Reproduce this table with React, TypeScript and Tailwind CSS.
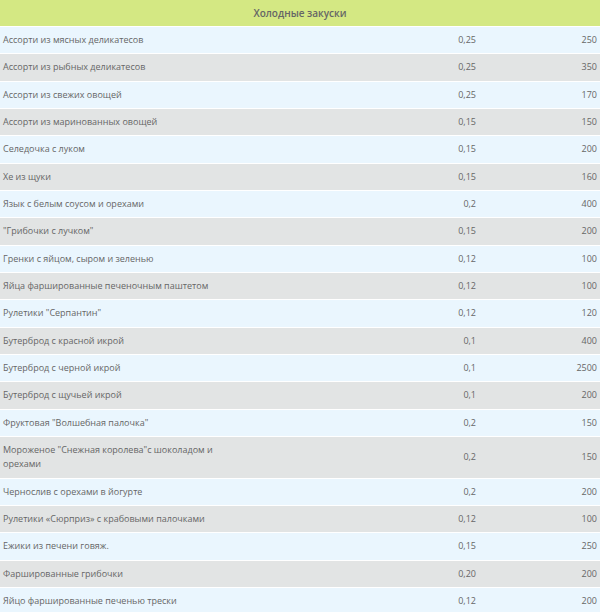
const ITEMS: [string, string, string][] = [
  ['Ассорти из мясных деликатесов', '0,25', '250'],
  ['Ассорти из рыбных деликатесов', '0,25', '350'],
  ['Ассорти из свежих овощей', '0,25', '170'],
  ['Ассорти из маринованных овощей', '0,15', '150'],
  ['Селедочка с луком', '0,15', '200'],
  ['Хе из щуки', '0,15', '160'],
  ['Язык с белым соусом и орехами', '0,2', '400'],
  ['"Грибочки с лучком"', '0,15', '200'],
  ['Гренки с яйцом, сыром и зеленью', '0,12', '100'],
  ['Яйца фаршированные печеночным паштетом', '0,12', '100'],
  ['Рулетики "Серпантин"', '0,12', '120'],
  ['Бутерброд с красной икрой', '0,1', '400'],
  ['Бутерброд с черной икрой', '0,1', '2500'],
  ['Бутерброд с щучьей икрой', '0,1', '200'],
  ['Фруктовая "Волшебная палочка"', '0,2', '150'],
  ['Мороженое "Снежная королева"с шоколадом и орехами', '0,2', '150'],
  ['Чернослив с орехами в йогурте', '0,2', '200'],
  ['Рулетики «Сюрприз» с крабовыми палочками', '0,12', '100'],
  ['Ежики из печени говяж.', '0,15', '250'],
  ['Фаршированные грибочки', '0,20', '200'],
  ['Яйцо фаршированные печенью трески', '0,12', '200'],
]

export default function App() {
  return (
    <div className="w-[600px] h-[612px] overflow-hidden bg-white font-['Open_Sans',sans-serif] text-[9px] text-[#666]">
      <table className="w-full table-fixed border-separate border-spacing-y-px -mt-px">
        <colgroup>
          <col className="w-[250px]" />
          <col className="w-[230px]" />
          <col className="w-[120px]" />
        </colgroup>
        <thead>
          <tr className="bg-[#d4e883]">
            <th colSpan={3} className="h-[26px] text-center text-[10px] font-semibold leading-[14px]">
              Холодные закуски
            </th>
          </tr>
        </thead>
        <tbody>
          {ITEMS.map(([name, weight, price], i) => (
            <tr key={i} className={i % 2 === 0 ? 'bg-[#eaf6fe]' : 'bg-[#e2e4e4]'}>
              <td className="py-[6px] pl-[3px] pr-2 leading-[14.33px] text-left align-middle">{name}</td>
              <td className="py-[6px] pr-1 leading-[14.33px] text-right align-middle">{weight}</td>
              <td className="py-[6px] pr-[3px] leading-[14.33px] text-right align-middle">{price}</td>
            </tr>
          ))}
        </tbody>
      </table>
    </div>
  )
}
